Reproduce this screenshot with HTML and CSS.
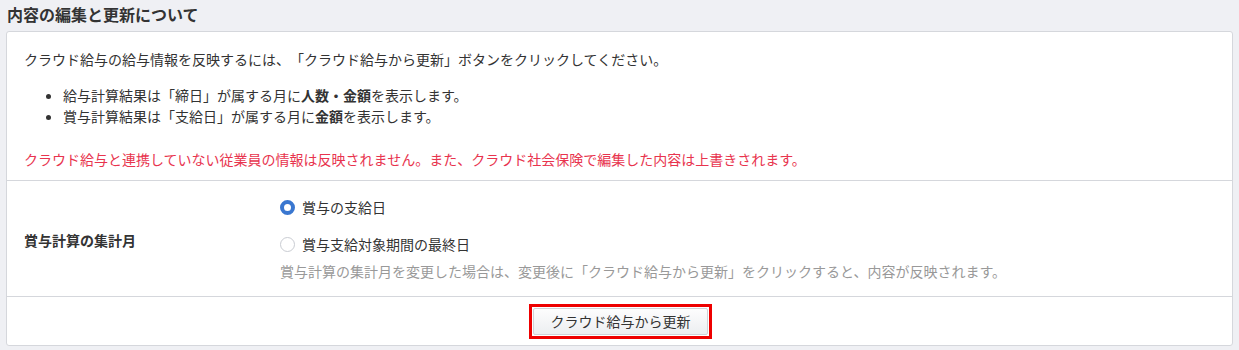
FILE: index.html
```html
<!DOCTYPE html>
<html lang="ja">
<head>
    <meta charset="UTF-8">
    <title>内容の編集と更新について</title>
    <link rel="stylesheet" href="styles.css">
</head>
<body>
    <h2 class="page-title">内容の編集と更新について</h2>
    <div class="card">
        <div class="card-section intro">
            <p>クラウド給与の給与情報を反映するには、「クラウド給与から更新」ボタンをクリックしてください。</p>
            <ul class="notes">
                <li>給与計算結果は「締日」が属する月に<b>人数・金額</b>を表示します。</li>
                <li>賞与計算結果は「支給日」が属する月に<b>金額</b>を表示します。</li>
            </ul>
            <p class="warning">クラウド給与と連携していない従業員の情報は反映されません。また、クラウド社会保険で編集した内容は上書きされます。</p>
        </div>
        <div class="card-section setting">
            <div class="setting-label">賞与計算の集計月</div>
            <div class="setting-body">
                <label class="radio"><input type="radio" name="month" checked><span class="radio-mark"></span>賞与の支給日</label>
                <label class="radio"><input type="radio" name="month"><span class="radio-mark"></span>賞与支給対象期間の最終日</label>
                <p class="help">賞与計算の集計月を変更した場合は、変更後に「クラウド給与から更新」をクリックすると、内容が反映されます。</p>
            </div>
        </div>
        <div class="card-section actions">
            <div class="highlight">
                <button type="button" class="btn">クラウド給与から更新</button>
            </div>
        </div>
    </div>
</body>
</html>
```

FILE: styles.css
```css
body {
    margin: 0;
    padding: 0 6px;
    background-color: #eff0f4;
    color: #333;
    font-family: "Noto Sans CJK JP", "Noto Sans", sans-serif;
    font-size: 14px;
    text-spacing-trim: space-all;
}
.page-title {
    margin: 0;
    padding: 3px 1px 0;
    height: 28px;
    font-size: 16px;
    font-weight: bold;
    line-height: 22px;
    color: #333;
}
.card {
    background-color: #fff;
    border: 1px solid #d5d7dc;
    border-radius: 3px;
}
.card-section {
    border-top: 1px solid #d5d7dc;
}
.card-section:first-child {
    border-top: none;
}
.intro {
    padding: 17px 17px 10px;
    height: 121px;
}
.intro p {
    margin: 0;
    line-height: 20px;
}
.notes {
    margin: 16px 0 0;
    padding-left: 39px;
    line-height: 21px;
}
.notes b {
    font-weight: bold;
}
.intro .warning {
    margin-top: 22px;
    color: #e8344e;
}
.setting {
    display: flex;
    align-items: center;
    height: 115px;
}
.setting-label {
    width: 256px;
    padding: 3px 0 0 17px;
    font-weight: bold;
}
.setting-body {
    padding-top: 0;
}
.radio {
    display: flex;
    align-items: center;
    height: 22px;
    margin-bottom: 15px;
    cursor: pointer;
}
.radio + .radio {
    margin-bottom: 6px;
}
.radio input {
    display: none;
}
.radio-mark {
    box-sizing: border-box;
    width: 15px;
    height: 15px;
    margin-right: 7px;
    border: 1px solid #c9ccd2;
    border-radius: 50%;
    background-color: #fff;
}
.radio input:checked + .radio-mark {
    border: 4px solid #3a77d0;
}
.help {
    margin: 0;
    color: #999;
    line-height: 20px;
}
.actions {
    display: flex;
    justify-content: center;
    align-items: center;
    height: 48px;
}
.highlight {
    border: 3px solid #ee0000;
    padding: 1px;
    margin-left: 2px;
}
.btn {
    display: block;
    width: 175px;
    height: 27px;
    border: 1px solid #cfd2d7;
    border-radius: 2px;
    background: linear-gradient(#fdfdfd, #eceef1);
    color: #333;
    font-family: inherit;
    font-size: 14px;
}
```
